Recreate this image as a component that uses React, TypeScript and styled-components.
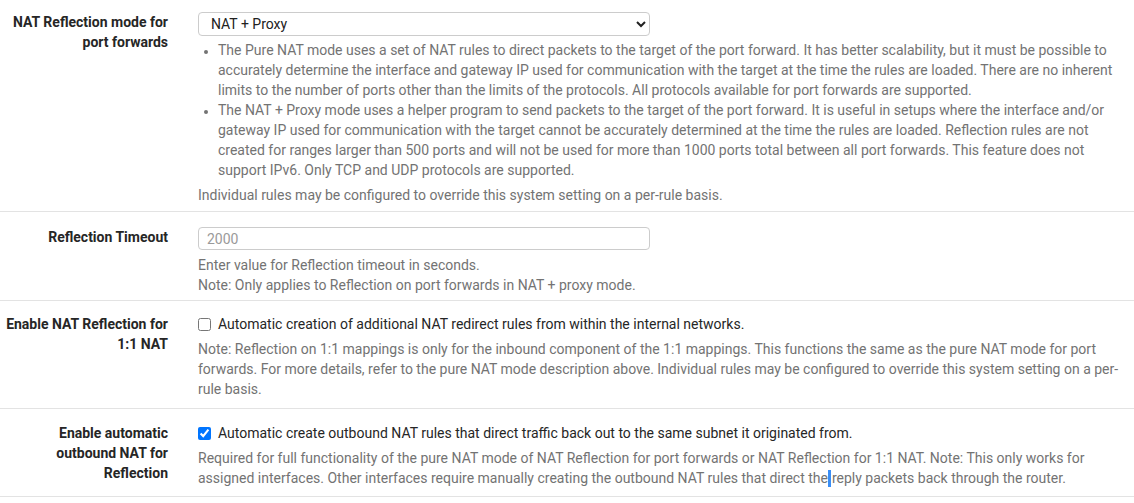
import React, { useState } from 'react';
import styled, { createGlobalStyle } from 'styled-components';

const GlobalStyle = createGlobalStyle`
    html, body {
        margin: 0;
        padding: 0;
        background: #ffffff;
        overflow: hidden;
    }
    body {
        font-family: Roboto, "Liberation Sans", Arial, sans-serif;
        font-size: 14px;
        line-height: 20px;
        color: #212121;
    }
`;

const Panel = styled.div`
    width: 1134px;
`;

const Row = styled.div<{ $top: number; $bottom: number }>`
    display: grid;
    grid-template-columns: 168px 1fr;
    column-gap: 30px;
    padding-top: ${props => props.$top}px;
    padding-bottom: ${props => props.$bottom}px;
    border-bottom: 1px solid #e3e3e3;
`;

const Label = styled.div`
    text-align: right;
    font-weight: 700;
    color: #262626;
    line-height: 20px;
`;

const Control = styled.div`
    min-width: 0;
`;

const Select = styled.select`
    display: block;
    width: 452px;
    height: 24px;
    padding: 0 6px 0 8px;
    border: 1px solid #cccccc;
    border-radius: 4px;
    background: #ffffff;
    font-family: Roboto, "Liberation Sans", Arial, sans-serif;
    font-size: 14px;
    color: #212121;
    outline: none;
`;

const Input = styled.input`
    display: block;
    box-sizing: border-box;
    width: 452px;
    height: 23px;
    padding: 0 8px;
    border: 1px solid #cccccc;
    border-radius: 4px;
    font-family: Roboto, "Liberation Sans", Arial, sans-serif;
    font-size: 14px;
    color: #212121;
    outline: none;
    &::placeholder {
        color: #9a9a9a;
    }
`;

const Help = styled.div<{ $gap?: number }>`
    color: #737373;
    margin-top: ${props => props.$gap ?? 0}px;
`;

const List = styled.ul`
    margin: 4px 0 5px;
    padding-left: 20px;
    color: #737373;
    li::marker {
        font-size: 12px;
    }
`;

const CheckLine = styled.label`
    display: flex;
    align-items: center;
    gap: 7px;
    color: #262626;
`;

const Check = styled.input`
    width: 13px;
    height: 13px;
    margin: 0;
`;

const Caret = styled.span`
    display: inline-block;
    width: 3px;
    height: 17px;
    margin-right: 1px;
    vertical-align: -4px;
    background: #3a8ef5;
`;

const App = () => {
    const [mode, setMode] = useState('proxy');
    const [oneToOne, setOneToOne] = useState(false);
    const [outbound, setOutbound] = useState(true);

    return (
        <>
            <GlobalStyle />
            <Panel>
                <Row $top={12} $bottom={6}>
                    <Label>NAT Reflection mode for port forwards</Label>
                    <Control>
                        <Select value={mode} onChange={e => setMode(e.target.value)}>
                            <option value="disable">Disable</option>
                            <option value="proxy">NAT + Proxy</option>
                            <option value="purenat">Pure NAT</option>
                        </Select>
                        <List>
                            <li>
                                The Pure NAT mode uses a set of NAT rules to direct packets to the target of the port forward. It has better scalability, but it must be possible to accurately determine the interface and gateway IP used for communication with the target at the time the rules are loaded. There are no inherent limits to the number of ports other than the limits of the protocols. All protocols available for port forwards are supported.
                            </li>
                            <li>
                                The NAT + Proxy mode uses a helper program to send packets to the target of the port forward. It is useful in setups where the interface and/or gateway IP used for communication with the target cannot be accurately determined at the time the rules are loaded. Reflection rules are not created for ranges larger than 500 ports and will not be used for more than 1000 ports total between all port forwards. This feature does not support IPv6. Only TCP and UDP protocols are supported.
                            </li>
                        </List>
                        <Help>Individual rules may be configured to override this system setting on a per-rule basis.</Help>
                    </Control>
                </Row>

                <Row $top={15} $bottom={5}>
                    <Label>Reflection Timeout</Label>
                    <Control>
                        <Input type="text" placeholder="2000" />
                        <Help $gap={5}>
                            Enter value for Reflection timeout in seconds.
                            <br />
                            Note: Only applies to Reflection on port forwards in NAT + proxy mode.
                        </Help>
                    </Control>
                </Row>

                <Row $top={13} $bottom={9}>
                    <Label>Enable NAT Reflection for 1:1 NAT</Label>
                    <Control>
                        <CheckLine>
                            <Check type="checkbox" checked={oneToOne} onChange={e => setOneToOne(e.target.checked)} />
                            Automatic creation of additional NAT redirect rules from within the internal networks.
                        </CheckLine>
                        <Help $gap={5}>
                            Note: Reflection on 1:1 mappings is only for the inbound component of the 1:1 mappings. This functions the same as the pure NAT mode for port forwards. For more details, refer to the pure NAT mode description above. Individual rules may be configured to override this system setting on a per-rule basis.
                        </Help>
                    </Control>
                </Row>

                <Row $top={14} $bottom={8}>
                    <Label>Enable automatic outbound NAT for Reflection</Label>
                    <Control>
                        <CheckLine>
                            <Check type="checkbox" checked={outbound} onChange={e => setOutbound(e.target.checked)} />
                            Automatic create outbound NAT rules that direct traffic back out to the same subnet it originated from.
                        </CheckLine>
                        <Help $gap={5}>
                            Required for full functionality of the pure NAT mode of NAT Reflection for port forwards or NAT Reflection for 1:1 NAT. Note: This only works for assigned interfaces. Other interfaces require manually creating the outbound NAT rules that direct the<Caret />reply packets back through the router.
                        </Help>
                    </Control>
                </Row>
            </Panel>
        </>
    );
};

export default App;
